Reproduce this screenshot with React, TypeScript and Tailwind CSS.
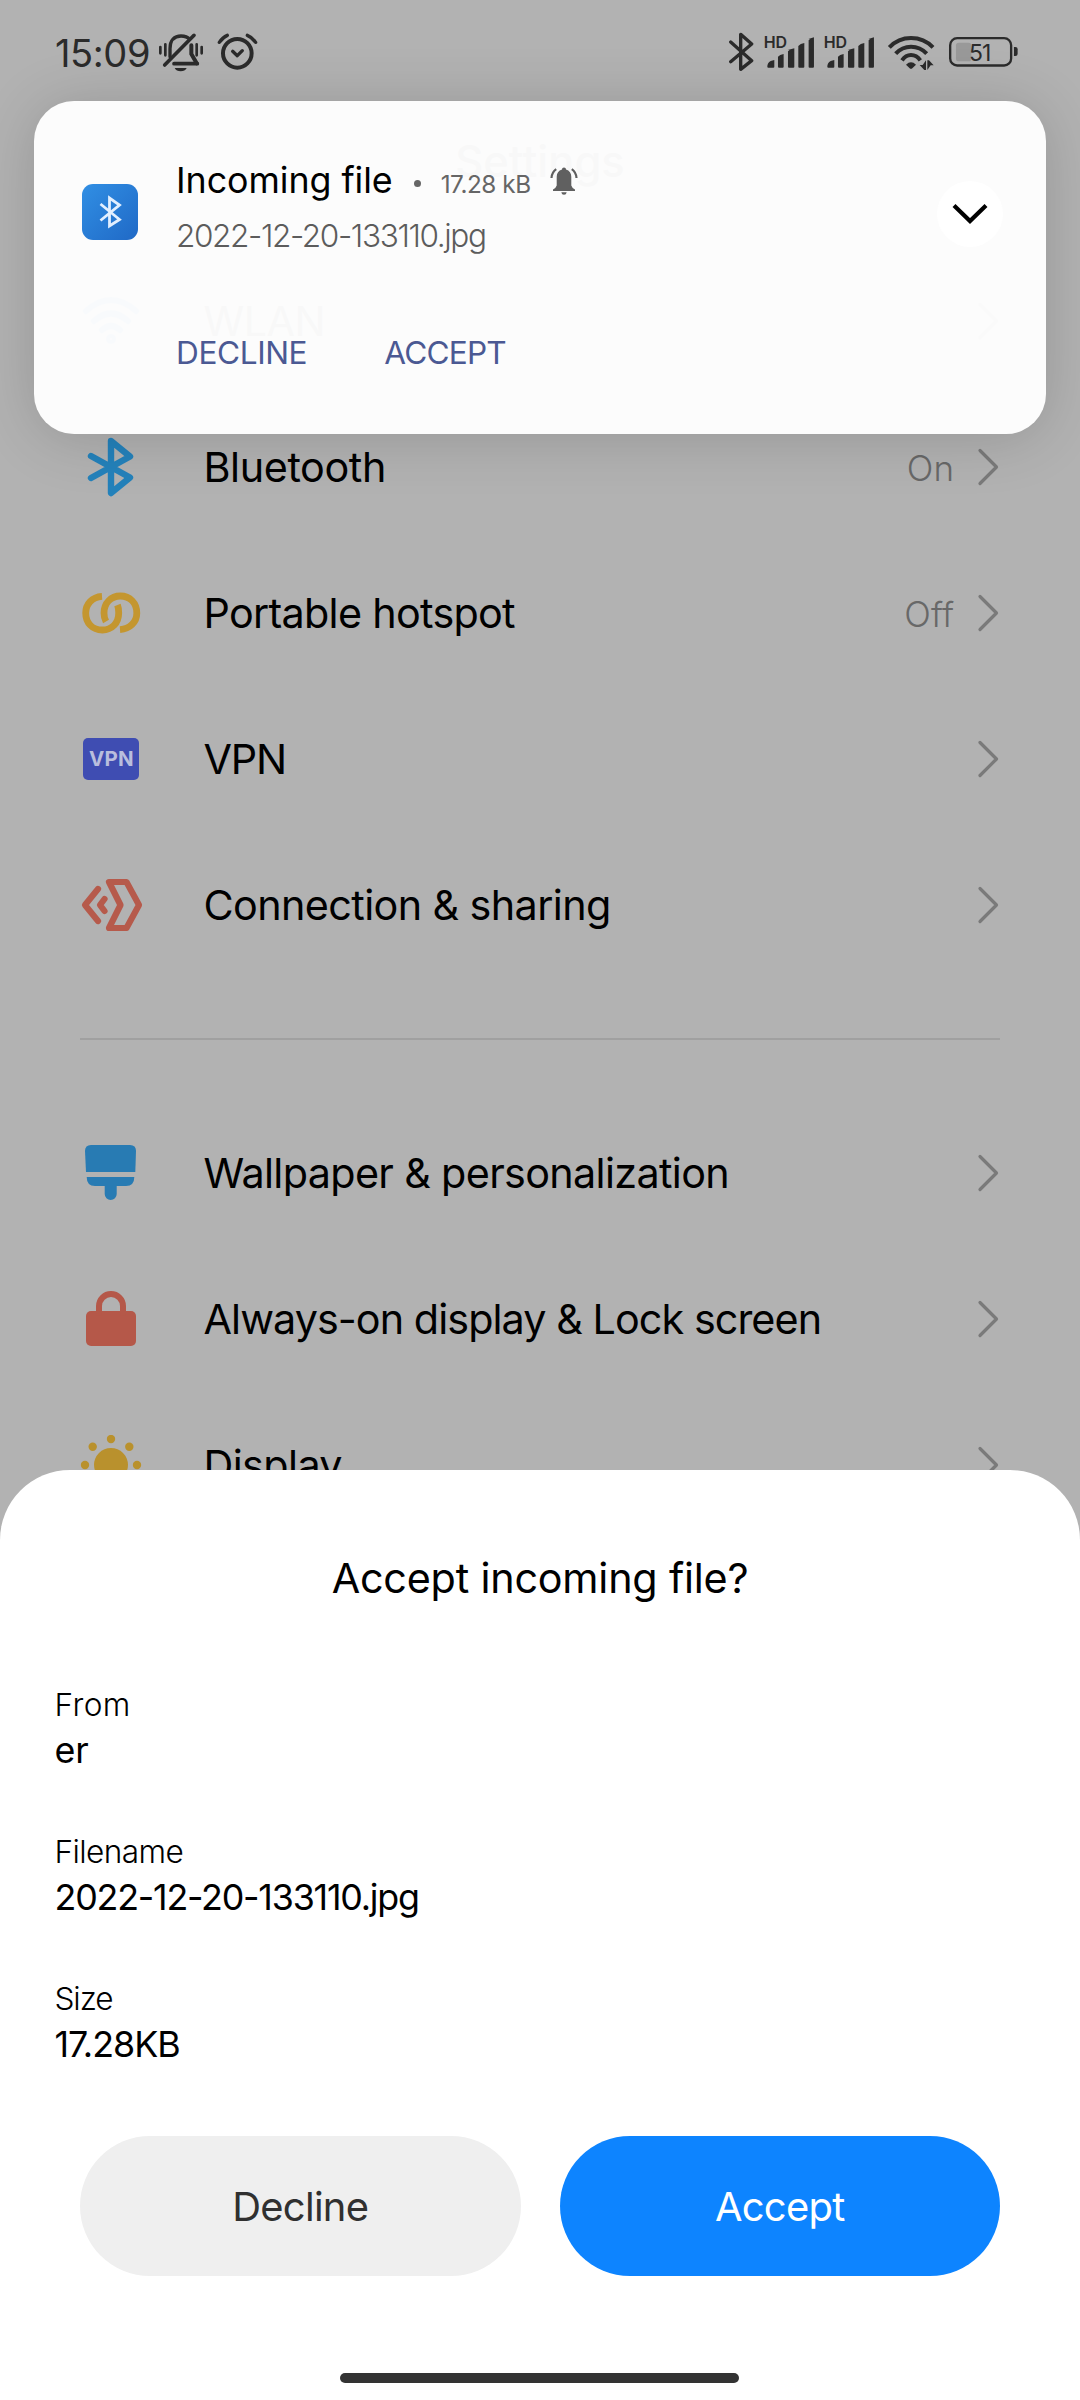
import type { ReactNode } from "react";

function StatusBar() {
  return (
    <div className="flex h-[104px] items-center pl-[54px] text-[#2b2b2b]">
      <span className="w-[105px] pt-px pl-px text-[38px] leading-none tracking-[-0.4px]">15:09</span>
      <svg viewBox="387 66 134 120" className="h-10 w-[44.7px]" fill="none" stroke="currentColor" strokeWidth="9" strokeLinecap="round">
        <path d="M420 140V116C420 91 433 78 453 78C465 78 474 82 479 88" strokeWidth="10" />
        <path d="M484 106V132L500 160" strokeWidth="12" />
        <path d="M432 161H502M404 165L492 76" strokeWidth="11" />
        <path d="M434 174H470Q465 184 452 184Q439 184 434 174Z" fill="currentColor" stroke="none" />
        <path d="M391 111V130M406 103V136M500 103V136M515 111V130" strokeWidth="8" />
      </svg>
      <svg viewBox="558 66 130 120" className="ml-[12.3px] h-10 w-[43.3px]" fill="none" stroke="currentColor" strokeLinecap="round">
        <circle cx="622" cy="130" r="43" strokeWidth="12" />
        <path d="M568 97Q578 82 592 76M652 76Q667 82 677 97" strokeWidth="10" />
        <path d="M608 124L622 137L637 122" strokeWidth="10" strokeLinejoin="round" />
      </svg>
      <div className="ml-auto flex items-center pr-[60.7px]">
        <svg viewBox="83 66 80 120" className="h-10 w-[26.7px]" fill="none" stroke="currentColor" strokeWidth="10" strokeLinecap="round" strokeLinejoin="round">
          <path d="M91 96L154 152L121 178V73L154 102L91 155" />
        </svg>
        <Signal className="ml-[10px] h-10 w-[51.3px]" />
        <Signal className="ml-[8.7px] h-10 w-[51.3px]" />
        <svg viewBox="560 66 144 120" className="ml-[11px] h-10 w-12" fill="none" stroke="currentColor" strokeWidth="12">
          <path d="M567 112Q594 84 632 84Q671 84 698 112" />
          <path d="M586 131Q605 110 632 110Q660 110 679 131" />
          <path d="M605 151Q616 135 632 135Q649 135 660 151" />
          <path d="M617 164Q632 150 647 164L636 175Q632 178 628 175Z" fill="currentColor" stroke="none" />
          <path d="M677 151V180H672L658 165H667ZM681 180V151H686L700 166H691Z" fill="currentColor" stroke="none" />
        </svg>
        <svg viewBox="744 66 214 120" className="ml-[13.3px] h-10 w-[71.3px]">
          <rect x="768" y="98" width="46" height="56" rx="8" fill="#999999" />
          <rect x="750.5" y="84.5" width="183" height="82" rx="21" fill="none" stroke="currentColor" strokeWidth="7" />
          <path d="M942 111H946Q953 111 953 118V131Q953 138 946 138H942Z" fill="currentColor" />
          <text x="839" y="153" textAnchor="middle" fontSize="69" letterSpacing="-3" fill="currentColor">51</text>
        </svg>
      </div>
    </div>
  );
}

function Signal({ className }: { className: string }) {
  return (
    <svg viewBox="193 66 154 120" className={className} fill="currentColor">
      <text x="192" y="114" fontSize="48" fontWeight="600" letterSpacing="0">HD</text>
      <path d="M203 170Q203 158 213 153L224 150V170Q224 173 221 173H206Q203 173 203 170Z" />
      <path d="M235 140Q240 134 252 132V170Q252 173 249 173H238Q235 173 235 170Z" />
      <path d="M265 124Q271 117 284 115V170Q284 173 281 173H268Q265 173 265 170Z" />
      <path d="M296 108Q302 101 314 99V170Q314 173 311 173H299Q296 173 296 170Z" />
      <path d="M327 91Q332 84 343 82V170Q343 173 340 173H330Q327 173 327 170Z" />
    </svg>
  );
}

function Glyph({ children, className }: { children: ReactNode; className?: string }) {
  return (
    <svg viewBox="0 0 64 60" className={`h-[60px] w-16 shrink-0 ${className ?? ""}`} fill="none" stroke="currentColor" strokeWidth="6" strokeLinecap="round" strokeLinejoin="round">
      {children}
    </svg>
  );
}

const wlanIcon = (
  <Glyph className="text-[#237ab0]">
    <path d="M6 20Q31 -2 56 20M14 30Q31 15 48 30M22 39Q31 31 40 39" />
    <circle cx="31" cy="48" r="2" />
  </Glyph>
);
const bluetoothIcon = (
  <Glyph className="text-[#2482bb]">
    <path d="M11 19L50 40.5L31 56V4L50 19.5L11 41" strokeWidth="6.4" />
  </Glyph>
);
const hotspotIcon = (
  <Glyph className="text-[#c4962f]">
    <path d="M22 13.3C12 14 5.7 21 5.7 30C5.7 40 12.5 47 22.3 47C32 47 38.7 40 38.7 30Q38.7 25 37.5 22" strokeWidth="6.8" strokeLinecap="butt" />
    <path d="M40 46.7C50 46 56.8 39 56.8 30C56.8 20 50 13 40.3 13C31 13 24 20 24 30Q24 35 26 38.5" strokeWidth="6.8" strokeLinecap="butt" />
  </Glyph>
);
const vpnIcon = (
  <div className="flex h-[60px] w-16 items-center pl-[3px]">
    <div className="flex h-[42px] w-[56px] items-center justify-center rounded-[5px] bg-[#3f4db2] pl-px text-[20.5px] leading-none font-bold tracking-[0.2px] text-[#b9bedd]">VPN</div>
  </div>
);
const sharingIcon = (
  <Glyph className="text-[#b65a4b]">
    <path d="M29 7H46.5L59 30L46.5 53H29L40.5 30Z" strokeWidth="6.2" />
    <path d="M18 14L5 30L18 46M24.5 24L20 30L24.5 36" strokeWidth="6.2" />
  </Glyph>
);
const brushIcon = (
  <Glyph className="text-[#287bb3]">
    <g fill="currentColor" stroke="none">
      <path d="M5 8Q5 2 11 2H50Q56 2 56 8L55.3 29H6Z" />
      <path d="M6.7 34H54.3Q54.3 43 46 43H36.7V51A6 6 0 0 1 24.7 51V43H15Q6.7 43 6.7 34Z" />
    </g>
  </Glyph>
);
const lockIcon = (
  <Glyph className="text-[#b55849]">
    <rect x="6" y="22" width="50" height="35" rx="5" fill="currentColor" stroke="none" />
    <path d="M19 24V17A12 12 0 0 1 43 17V24" />
  </Glyph>
);
const sunIcon = (
  <Glyph className="text-[#b9912d]">
    <g fill="currentColor" stroke="none">
      <circle cx="31" cy="30" r="17" />
      <circle cx="31" cy="4" r="4.2" />
      <circle cx="12.7" cy="11.7" r="4.2" />
      <circle cx="49.3" cy="11.7" r="4.2" />
      <circle cx="5" cy="30" r="4.2" />
      <circle cx="57" cy="30" r="4.2" />
    </g>
  </Glyph>
);

function Row({ icon, label, value, tracking }: { icon: ReactNode; label: string; value?: string; tracking: string }) {
  return (
    <div className="flex h-[146px] items-center pr-[81px] pl-20">
      {icon}
      <span className={`ml-[59.5px] pt-[2px] text-[41.3px] leading-none whitespace-nowrap text-black ${tracking}`}>{label}</span>
      {value && <span className="ml-auto pt-[2px] text-[35px] leading-none font-light text-[#686868]">{value}</span>}
      <svg viewBox="0 0 22 40" className={`h-10 w-[22px] ${value ? "ml-[23px]" : "ml-auto"}`} fill="none" stroke="#7a7a7a" strokeWidth="3.2" strokeLinecap="round" strokeLinejoin="round">
        <path d="M3 3.5L19.5 20L3 36.5" />
      </svg>
    </div>
  );
}

function Notification() {
  return (
    <div className="absolute top-[101px] left-[34px] flex h-[333px] w-[1012px] rounded-[40px] bg-[#fdfdfd]/98 shadow-[0_4px_60px_rgba(0,0,0,0.16)]">
      <div className="mt-[83px] ml-12 h-14 w-14 rounded-[11px] bg-linear-to-br from-[#318fe4] to-[#2069c6]">
        <svg viewBox="0 0 56 56" className="h-14 w-14" fill="none" stroke="#e2efff" strokeWidth="2.8">
          <path d="M18.5 20L37.5 35.5L27.5 42V14L37.5 21L18.5 36.5" />
        </svg>
      </div>
      <div className="ml-[38px] flex flex-col pt-[52px]">
        <div className="flex h-14 items-center">
          <span className="text-[35.8px] leading-none tracking-[-0.05px] text-black">Incoming file</span>
          <span className="mt-[5px] ml-[21px] h-[7px] w-[7px] rounded-full bg-[#666]" />
          <span className="mt-[7px] ml-[20px] text-[24.3px] leading-none tracking-[-0.45px] text-[#666]">17.28 kB</span>
          <svg viewBox="0 0 28 28" className="ml-[19px] h-7 w-7" fill="#606060">
            <path d="M14 0.5C15.2 0.5 16 1.3 16 2.6C19.5 3.6 21.3 6.4 21.3 10V18.5Q22 21 25 22.5V24H3V22.5Q6 21 6.7 18.5V10C6.7 6.4 8.5 3.6 12 2.6C12 1.3 12.8 0.5 14 0.5Z" />
            <path d="M11.3 25.2H16.7Q16.3 27.8 14 27.8Q11.7 27.8 11.3 25.2Z" />
            <path d="M6.2 2.2Q1.8 5.5 1.5 11M21.8 2.2Q26.2 5.5 26.5 11" fill="none" stroke="#606060" strokeWidth="2.2" />
          </svg>
        </div>
        <span className="flex h-[55px] items-center pb-px text-[31.6px] leading-none font-light tracking-[-1.4px] text-[#5c5c5c]">2022-12-20-133110.jpg</span>
        <div className="mt-[61px] flex h-14 items-center text-[31.6px] leading-none text-[#4b5993]">
          <span className="tracking-[-0.4px]">DECLINE</span>
          <span className="ml-[77px] tracking-[-0.8px]">ACCEPT</span>
        </div>
      </div>
      <div className="mt-20 mr-[43px] ml-auto flex h-[66px] w-[66px] items-center justify-center rounded-full bg-white">
        <svg viewBox="0 0 36 24" className="h-6 w-9" fill="none" stroke="#000" strokeWidth="4.2">
          <path d="M2 3.5L18 19L34 3.5" />
        </svg>
      </div>
    </div>
  );
}

function Field({ label, labelTracking, value, tracking }: { label: string; labelTracking: string; value: string; tracking: string }) {
  return (
    <div>
      <div className={`flex h-[46px] items-center text-[31.6px] leading-none font-light ${labelTracking}`}>{label}</div>
      <div className={`flex h-11 items-center pt-px text-[35.8px] leading-none ${tracking}`}>{value}</div>
    </div>
  );
}

function Sheet() {
  return (
    <div className="absolute inset-x-0 bottom-0 flex h-[930px] flex-col rounded-t-[70px] bg-white pt-[81px] text-black">
      <h2 className="flex h-14 items-center justify-center text-[41.3px] leading-none tracking-[-0.2px]">Accept incoming file?</h2>
      <div className="mt-[75px] flex flex-col gap-[57px] pl-[54.5px]">
        <Field label="From" labelTracking="tracking-[0.4px]" value="er" tracking="tracking-normal" />
        <Field label="Filename" labelTracking="tracking-[-0.6px]" value="2022-12-20-133110.jpg" tracking="tracking-[-1.2px]" />
        <Field label="Size" labelTracking="tracking-[-1.1px]" value="17.28KB" tracking="tracking-[-1px]" />
      </div>
      <div className="mt-[70px] flex gap-[39px] px-20 text-[39.9px] leading-none tracking-[-0.7px]">
        <button className="h-[140px] flex-1 rounded-full bg-[#efefef] pt-0.5 text-[#303030]">Decline</button>
        <button className="h-[140px] flex-1 rounded-full bg-[#0d84ff] pt-0.5 text-white">Accept</button>
      </div>
      <div className="mt-[97px] ml-[340px] h-[10px] w-[399px] rounded-full bg-[#333]" />
    </div>
  );
}

export default function App() {
  return (
    <div className="relative h-[2400px] w-[1080px] overflow-hidden bg-[#b2b2b2] font-['Inter',sans-serif]">
      <StatusBar />
      <div className="flex h-[144px] items-start justify-center pt-[36px] text-[43.5px] leading-none font-medium text-black">Settings</div>
      <Row icon={wlanIcon} label="WLAN" tracking="tracking-[-0.5px]" />
      <Row icon={bluetoothIcon} label="Bluetooth" value="On" tracking="tracking-[-0.4px]" />
      <Row icon={hotspotIcon} label="Portable hotspot" value="Off" tracking="tracking-[-0.7px]" />
      <Row icon={vpnIcon} label="VPN" tracking="tracking-[-1.2px]" />
      <Row icon={sharingIcon} label="Connection & sharing" tracking="tracking-[-0.6px]" />
      <div className="mx-20 my-[60px] h-0.5 bg-[#a0a0a0]" />
      <Row icon={brushIcon} label="Wallpaper & personalization" tracking="tracking-[-0.65px]" />
      <Row icon={lockIcon} label="Always-on display & Lock screen" tracking="tracking-[-0.93px]" />
      <Row icon={sunIcon} label="Display" tracking="tracking-[-0.6px]" />
      <Notification />
      <Sheet />
    </div>
  );
}
